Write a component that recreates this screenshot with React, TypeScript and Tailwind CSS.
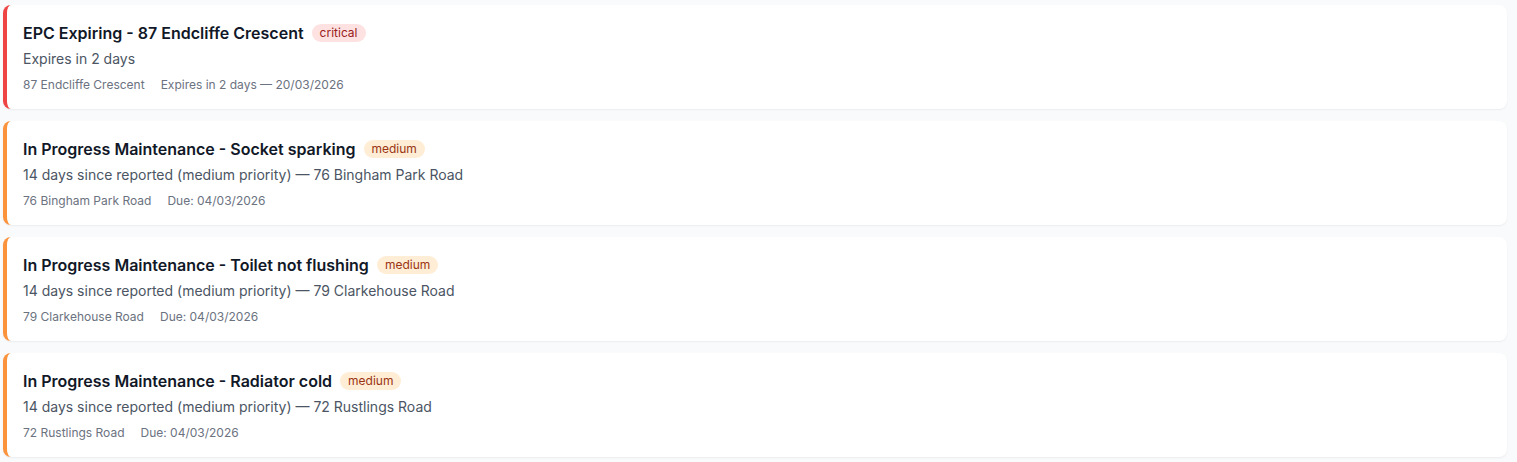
import React from 'react'

type Alert = {
    title: string
    level: 'critical' | 'medium'
    summary: string
    place: string
    when: string
}

const alerts: Alert[] = [
    {
        title: 'EPC Expiring - 87 Endcliffe Crescent',
        level: 'critical',
        summary: 'Expires in 2 days',
        place: '87 Endcliffe Crescent',
        when: 'Expires in 2 days — 20/03/2026',
    },
    {
        title: 'In Progress Maintenance - Socket sparking',
        level: 'medium',
        summary: '14 days since reported (medium priority) — 76 Bingham Park Road',
        place: '76 Bingham Park Road',
        when: 'Due: 04/03/2026',
    },
    {
        title: 'In Progress Maintenance - Toilet not flushing',
        level: 'medium',
        summary: '14 days since reported (medium priority) — 79 Clarkehouse Road',
        place: '79 Clarkehouse Road',
        when: 'Due: 04/03/2026',
    },
    {
        title: 'In Progress Maintenance - Radiator cold',
        level: 'medium',
        summary: '14 days since reported (medium priority) — 72 Rustlings Road',
        place: '72 Rustlings Road',
        when: 'Due: 04/03/2026',
    },
]

function AlertCard({ alert }: { alert: Alert }) {
    const critical = alert.level === 'critical'
    return (
        <div
            className={
                critical
                    ? 'bg-white rounded-lg border-l-4 border-[#ef4444] p-4 shadow-[0_1px_2px_rgba(0,0,0,0.06)]'
                    : 'bg-white rounded-lg border-l-4 border-[#fb923c] p-4 shadow-[0_1px_2px_rgba(0,0,0,0.06)]'
            }
        >
            <div className="flex items-center gap-2">
                <h3 className="text-base leading-6 font-semibold text-[#111827]">{alert.title}</h3>
                <span
                    className={
                        critical
                            ? 'rounded-full bg-[#fee2e2] text-[#991b1b] text-xs leading-[18px] px-2'
                            : 'rounded-full bg-[#ffedd5] text-[#9a3412] text-xs leading-[18px] px-2'
                    }
                >
                    {alert.level}
                </span>
            </div>
            <p className="mt-1 text-sm leading-5 text-[#4b5563]">{alert.summary}</p>
            <div className="mt-2 flex gap-4 text-xs leading-4 text-[#6b7280]">
                <span>{alert.place}</span>
                <span>{alert.when}</span>
            </div>
        </div>
    )
}

export default function App() {
    return (
        <div className="min-h-screen bg-[#f9fafb] font-['Inter',sans-serif] pt-[5px] pl-[3px] pr-[10px]">
            <div className="flex flex-col gap-3">
                {alerts.map((a) => (
                    <AlertCard key={a.title} alert={a} />
                ))}
            </div>
        </div>
    )
}
